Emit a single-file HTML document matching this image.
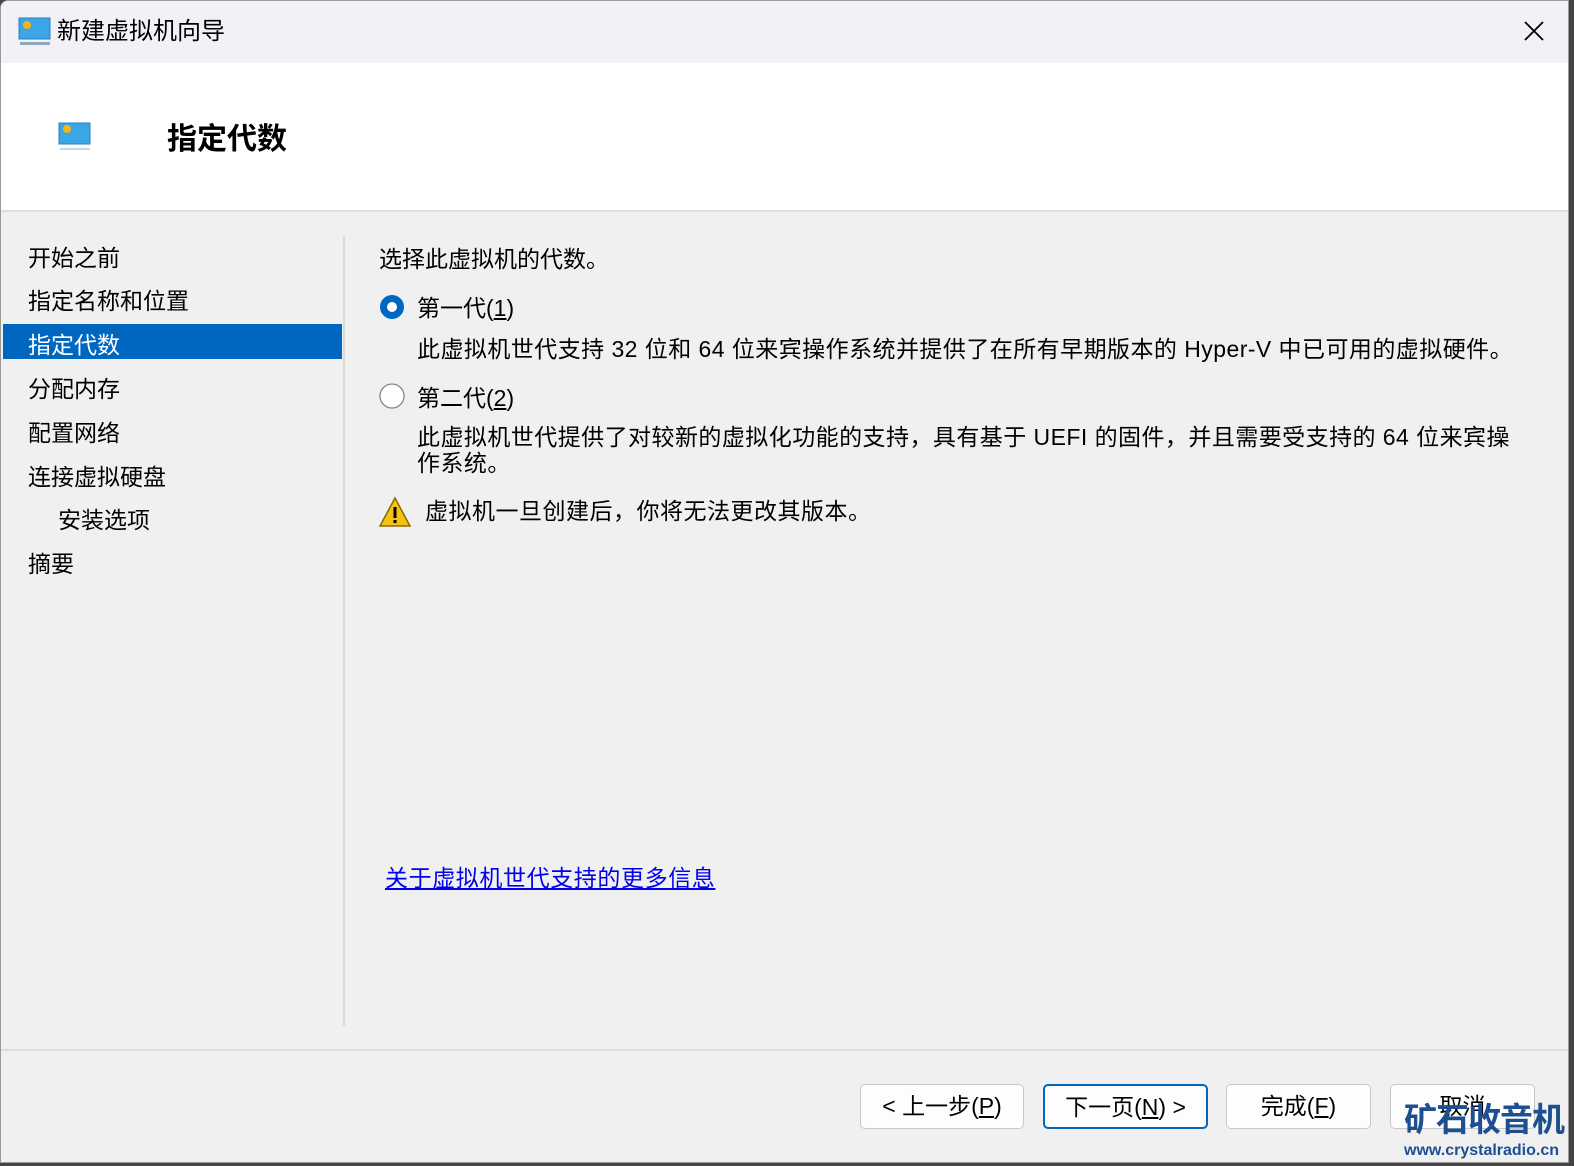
<!DOCTYPE html>
<html><head><meta charset="utf-8"><style>
*{margin:0;padding:0;box-sizing:border-box}
body{width:1574px;height:1166px;background:#444;position:relative;overflow:hidden;font-family:"Liberation Sans","Noto Sans CJK SC",sans-serif;color:#000}
.win{position:absolute;left:0;top:0;width:1569px;height:1163px;background:#f0f0f0;border:1px solid #9a9a9a;border-top-left-radius:8px;overflow:hidden}
.title{position:absolute;left:0;top:0;width:100%;height:62px;background:#f3f1f7}
.t{position:absolute;white-space:nowrap;font-size:23px;line-height:28px}
.header{position:absolute;left:0;top:62px;width:100%;height:149px;background:#fff;border-bottom:2px solid #dedede}
.side{position:absolute;left:27px;font-size:23px}
.sel{position:absolute;left:2px;top:323px;width:339px;height:35px;background:#0067c0}
.btn{position:absolute;top:1083px;height:45px;background:#fdfdfd;border:1px solid #c8c8c8;border-radius:5px;font-size:23px;text-align:center;line-height:42px}
</style></head><body>
<div class="win">
<div class="title">
<svg style="position:absolute;left:17px;top:16px" width="34" height="30"><rect x="1" y="1" width="31" height="21" fill="#3aa6e6" stroke="#2f7fb8"/><circle cx="9" cy="8" r="4" fill="#f6b61b"/><rect x="2" y="25" width="30" height="3" fill="#8fa9c0"/></svg>
<div class="t" style="left:56px;top:17px;font-size:24px">新建虚拟机向导</div>
<svg style="position:absolute;left:1522px;top:19px" width="22" height="22"><path d="M2 2L20 20M20 2L2 20" stroke="#000" stroke-width="1.8"/></svg>
</div>
<div class="header">
<svg style="position:absolute;left:57px;top:59px" width="34" height="30"><rect x="1" y="1" width="31" height="21" fill="#3aa6e6" stroke="#2f7fb8"/><circle cx="9" cy="7" r="4" fill="#f6b61b"/><rect x="2" y="26" width="30" height="2" fill="#c9d6e0"/></svg>
<div class="t" style="left:166px;top:59px;font-size:30px;font-weight:bold;line-height:36px">指定代数</div>
</div>
<div class="sel"></div>
<div class="t side" style="top:243px">开始之前</div>
<div class="t side" style="top:286px">指定名称和位置</div>
<div class="t side" style="top:330px;color:#fff">指定代数</div>
<div class="t side" style="top:374px">分配内存</div>
<div class="t side" style="top:418px">配置网络</div>
<div class="t side" style="top:462px">连接虚拟硬盘</div>
<div class="t side" style="top:505px;left:57px">安装选项</div>
<div class="t side" style="top:549px">摘要</div>
<div style="position:absolute;left:342px;top:235px;width:2px;height:790px;background:#d9d9d9"></div>
<div class="t" style="left:378px;top:244px">选择此虚拟机的代数。</div>
<svg style="position:absolute;left:378px;top:293px" width="28" height="28"><circle cx="13" cy="13" r="12" fill="#0067c0"/><circle cx="13" cy="13" r="5" fill="#fff"/></svg>
<div class="t" style="left:416px;top:293px">第一代(<u>1</u>)</div>
<div class="t" style="left:416px;top:334px;letter-spacing:0.45px">此虚拟机世代支持 32 位和 64 位来宾操作系统并提供了在所有早期版本的 Hyper-V 中已可用的虚拟硬件。</div>
<svg style="position:absolute;left:378px;top:382px" width="28" height="28"><circle cx="13" cy="13" r="12" fill="#fff" stroke="#8a8a8a" stroke-width="1.3"/></svg>
<div class="t" style="left:416px;top:383px">第二代(<u>2</u>)</div>
<div class="t" style="left:416px;top:423px;line-height:26px;letter-spacing:0.45px">此虚拟机世代提供了对较新的虚拟化功能的支持，具有基于 UEFI 的固件，并且需要受支持的 64 位来宾操<br>作系统。</div>
<svg style="position:absolute;left:377px;top:495px" width="34" height="32"><path d="M17 2L32 30H2Z" fill="#f5c211" stroke="#8a6a00" stroke-width="1.5"/><rect x="15.5" y="11" width="3" height="11" fill="#000"/><rect x="15.5" y="24" width="3" height="3" fill="#000"/></svg>
<div class="t" style="left:424px;top:496px;letter-spacing:0.5px">虚拟机一旦创建后，你将无法更改其版本。</div>
<div class="t" style="left:384px;top:863px;color:#0000ee;text-decoration:underline;letter-spacing:0.6px">关于虚拟机世代支持的更多信息</div>
<div style="position:absolute;left:0;top:1048px;width:100%;height:2px;background:#dcdcdc"></div>
<div class="btn" style="left:859px;width:164px;top:1083px">&lt; 上一步(<u>P</u>)</div>
<div class="btn" style="left:1042px;width:165px;border:2px solid #0067c0;top:1083px">下一页(<u>N</u>) &gt;</div>
<div class="btn" style="left:1225px;width:145px;top:1083px">完成(<u>F</u>)</div>
<div class="btn" style="left:1389px;width:145px;top:1083px">取消</div>
<div class="t" style="left:1403px;top:1099px;font-size:33px;font-weight:bold;color:#1d4f91;line-height:40px;letter-spacing:-1px">矿石收音机</div>
<div class="t" style="left:1403px;top:1140px;font-size:16px;font-weight:bold;color:#1d4f91;line-height:20px">www.crystalradio.cn</div>
</div>
</body></html>
